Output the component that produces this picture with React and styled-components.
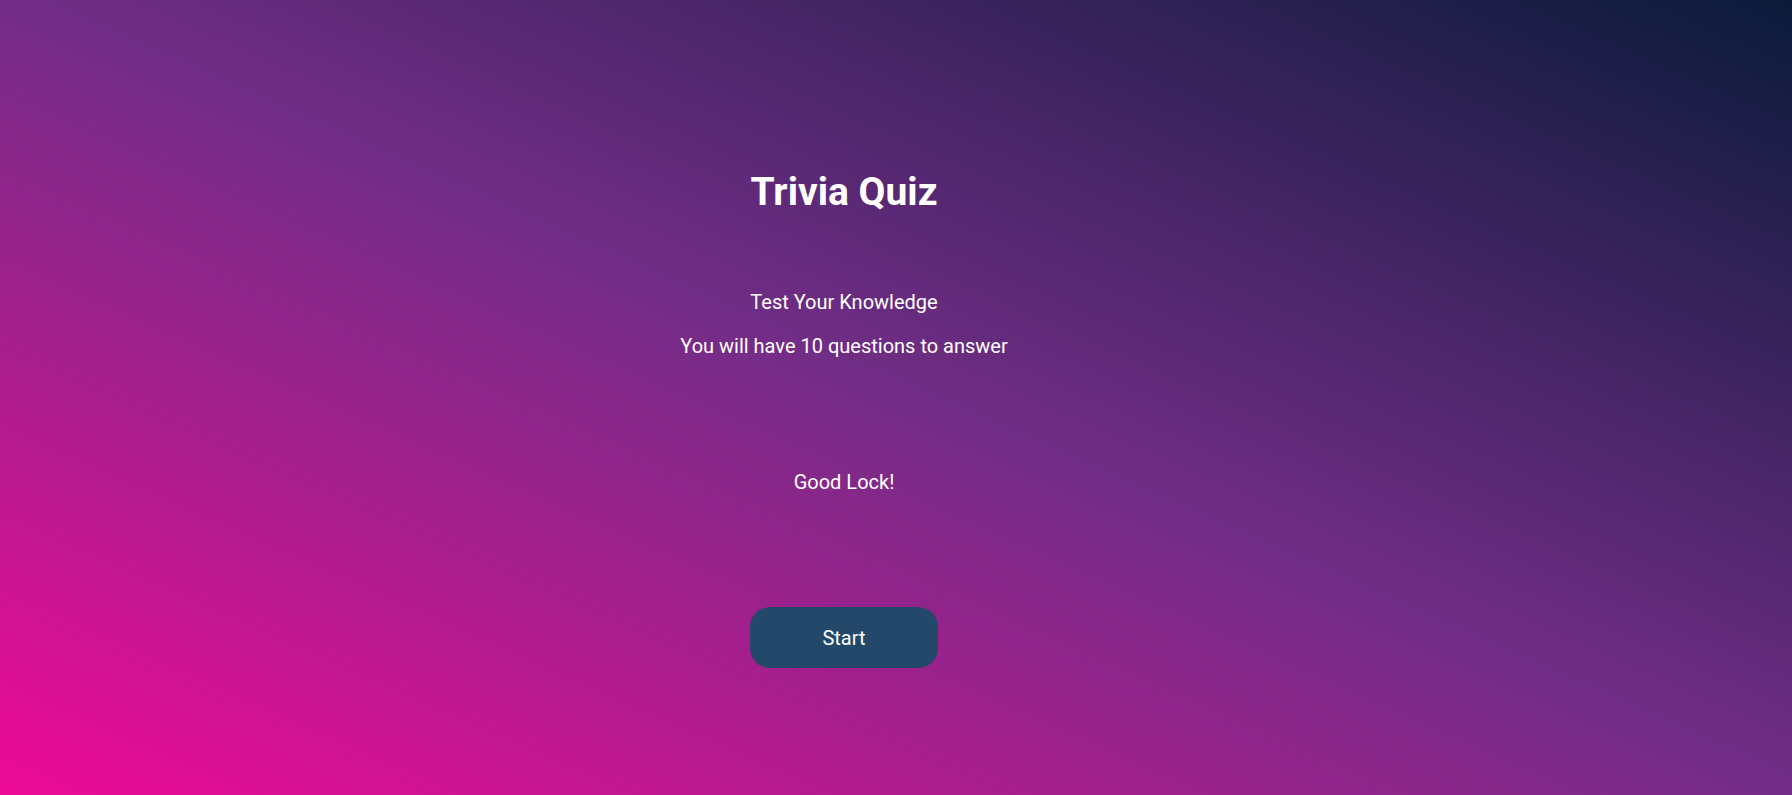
import React from "react";
import styled, { createGlobalStyle } from "styled-components";

const GlobalStyle = createGlobalStyle`
  html, body {
    margin: 0;
    padding: 0;
    min-height: 100%;
  }
  body {
    font-family: Roboto, "Liberation Sans", Arial, sans-serif;
    color: #fff;
  }
`;

export default function App() {
  return (
    <>
      <GlobalStyle />
      <Page>
        <Quiz>
          <Title>Trivia Quiz</Title>
          <Intro>
            <Text>Test Your Knowledge</Text>
            <Text>You will have 10 questions to answer</Text>
          </Intro>
          <Wish>Good Lock!</Wish>
          <StartButton type="button">Start</StartButton>
        </Quiz>
      </Page>
    </>
  );
}

const Page = styled.div`
  min-height: 100vh;
  background: linear-gradient(to top right, #ee0a96 0%, #732d87 50%, #0a1b3a 100%);
  box-sizing: border-box;
  padding-right: 104px;
`;

const Quiz = styled.div`
  display: flex;
  flex-direction: column;
  align-items: center;
  text-align: center;
  padding-top: 169px;
`;

const Title = styled.h1`
  margin: 0;
  font-size: 39px;
  font-weight: 700;
  line-height: 46px;
`;

const Intro = styled.div`
  display: flex;
  flex-direction: column;
  gap: 20px;
  margin-top: 75px;
`;

const Text = styled.p`
  margin: 0;
  font-size: 20px;
  line-height: 24px;
`;

const Wish = styled(Text)`
  margin-top: 112px;
`;

const StartButton = styled.button`
  margin-top: 113px;
  width: 188px;
  height: 61px;
  border: none;
  border-radius: 20px;
  background: #234869;
  color: #fff;
  font-family: Roboto, "Liberation Sans", Arial, sans-serif;
  font-size: 20px;
  cursor: pointer;
`;
